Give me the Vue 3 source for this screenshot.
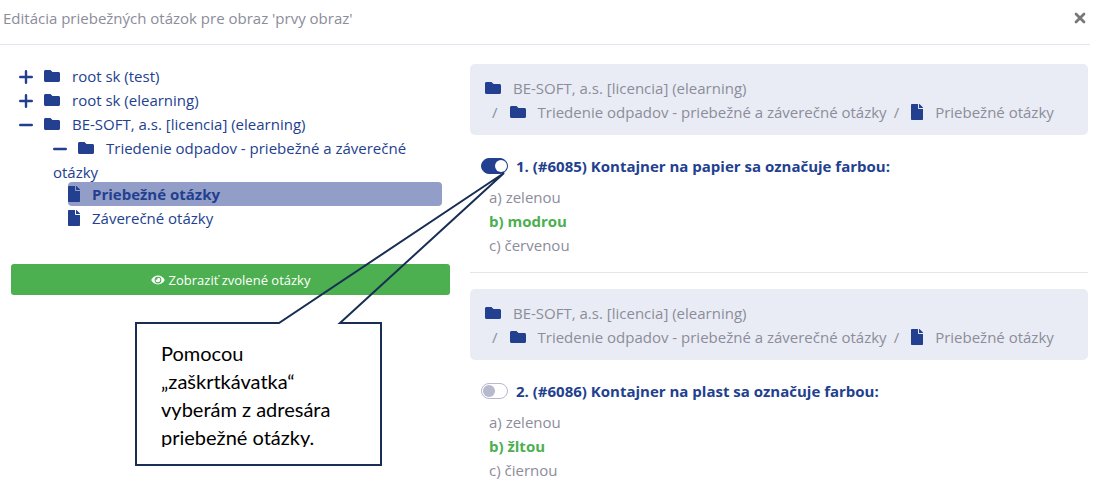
<script setup>
import { ref } from 'vue'

const paths = {
  folder: 'M464 128H272l-64-64H48C21.49 64 0 85.49 0 112v288c0 26.51 21.49 48 48 48h416c26.51 0 48-21.49 48-48V176c0-26.51-21.49-48-48-48z',
  file: 'M224 136V0H24C10.7 0 0 10.7 0 24v464c0 13.3 10.7 24 24 24h336c13.3 0 24-10.7 24-24V160H248c-13.2 0-24-10.8-24-24zm160-14.1v6.1H256V0h6.1c6.4 0 12.5 2.5 17 7l97.9 98c4.5 4.5 7 10.6 7 16.9z',
  eye: 'M572.52 241.4C518.29 135.59 410.93 64 288 64S57.68 135.64 3.48 241.41a32.35 32.35 0 0 0 0 29.19C57.71 376.41 165.07 448 288 448s230.32-71.64 284.52-177.41a32.35 32.35 0 0 0 0-29.19zM288 400a144 144 0 1 1 144-144 143.93 143.93 0 0 1-144 144zm0-240a95.31 95.31 0 0 0-25.31 3.79 47.85 47.85 0 0 1-66.9 66.9A95.78 95.78 0 1 0 288 160z'
}

const roots = ['root sk (test)', 'root sk (elearning)']

const questions = ref([
  {
    id: 'q6085',
    title: '1. (#6085) Kontajner na papier sa označuje farbou:',
    checked: true,
    answers: [
      { text: 'a) zelenou' },
      { text: 'b) modrou', correct: true },
      { text: 'c) červenou' }
    ]
  },
  {
    id: 'q6086',
    title: '2. (#6086) Kontajner na plast sa označuje farbou:',
    checked: false,
    answers: [
      { text: 'a) zelenou' },
      { text: 'b) žltou', correct: true },
      { text: 'c) čiernou' }
    ]
  }
])
</script>

<template>
  <div class="dialog">
    <header class="head">
      <h1>Editácia priebežných otázok pre obraz 'prvy obraz'</h1>
      <button class="close" type="button" aria-label="Zavrieť">
        <svg width="12" height="12" viewBox="0 0 12 12"><path d="M2 2l8 8M10 2l-8 8" stroke="currentColor" stroke-width="2.7" stroke-linecap="round" /></svg>
      </button>
    </header>

    <main class="columns">
      <section>
        <ul class="tree">
          <li v-for="name in roots" :key="name">
            <button class="toggle" type="button" aria-label="Rozbaliť">
              <svg width="14" height="14" viewBox="0 0 14 14"><path d="M1.2 7h11.6M7 1.2v11.6" stroke="currentColor" stroke-width="2.4" stroke-linecap="round" /></svg>
            </button>
            <a href="#"><svg class="folder" viewBox="0 0 512 512"><path :d="paths.folder" /></svg>{{ name }}</a>
          </li>
          <li>
            <button class="toggle" type="button" aria-label="Zbaliť">
              <svg width="14" height="14" viewBox="0 0 14 14"><path d="M1.2 7h11.6" stroke="currentColor" stroke-width="2.4" stroke-linecap="round" /></svg>
            </button>
            <a href="#"><svg class="folder" viewBox="0 0 512 512"><path :d="paths.folder" /></svg>BE-SOFT, a.s. [licencia] (elearning)</a>
            <ul class="level2">
              <li>
                <button class="toggle" type="button" aria-label="Zbaliť">
                  <svg width="14" height="14" viewBox="0 0 14 14"><path d="M1.2 7h11.6" stroke="currentColor" stroke-width="2.4" stroke-linecap="round" /></svg>
                </button>
                <a href="#"><svg class="folder" viewBox="0 0 512 512"><path :d="paths.folder" /></svg>Triedenie odpadov - priebežné a záverečné otázky</a>
                <ul class="level3">
                  <li class="selected">
                    <a href="#"><svg class="file" viewBox="0 0 384 512"><path :d="paths.file" /></svg>Priebežné otázky</a>
                  </li>
                  <li>
                    <a href="#"><svg class="file" viewBox="0 0 384 512"><path :d="paths.file" /></svg>Záverečné otázky</a>
                  </li>
                </ul>
              </li>
            </ul>
          </li>
        </ul>
        <button class="show" type="button">
          <svg width="14" height="12" viewBox="0 0 576 512"><path :d="paths.eye" /></svg>
          Zobraziť zvolené otázky
        </button>
      </section>

      <section>
        <article v-for="q in questions" :key="q.id" class="question">
          <nav class="crumbs" aria-label="Cesta">
            <div><svg class="folder" viewBox="0 0 512 512"><path :d="paths.folder" /></svg>BE-SOFT, a.s. [licencia] (elearning)</div>
            <div>
              <span class="slash">/</span><svg class="folder" viewBox="0 0 512 512"><path :d="paths.folder" /></svg>Triedenie odpadov - priebežné a záverečné otázky<span class="slash">/</span><svg class="file" viewBox="0 0 384 512"><path :d="paths.file" /></svg>Priebežné otázky
            </div>
          </nav>
          <div class="title">
            <input :id="q.id" v-model="q.checked" type="checkbox" />
            <label :for="q.id">{{ q.title }}</label>
          </div>
          <ul class="answers">
            <li v-for="a in q.answers" :key="a.text" :class="{ correct: a.correct }">{{ a.text }}</li>
          </ul>
        </article>
      </section>
    </main>

    <aside class="callout">
      <svg width="372" height="296" viewBox="0 0 372 296"><path d="M1 152H144L369 2L205 152H246V294H1Z" fill="none" stroke="#192e54" stroke-width="2" /></svg>
      <p>Pomocou<br />„zaškrtkávatka“<br />vyberám z adresára<br />priebežné otázky.</p>
    </aside>
  </div>
</template>

<style>
body {
  background: #fff;
}
</style>

<style scoped>
.dialog {
  position: relative;
  font: 15px/24px "Open Sans", "Noto Sans", sans-serif;
  color: #8c8c9b;
}
ul {
  list-style: none;
  margin: 0;
  padding: 0;
}
button {
  border: 0;
  padding: 0;
  background: none;
  font: inherit;
  color: inherit;
  cursor: pointer;
}
.head {
  display: flex;
  justify-content: space-between;
  align-items: center;
  margin-right: 5px;
  padding: 6px 4px 14px 3px;
  border-bottom: 1px solid #e4e6f0;
}
h1 {
  margin: 0;
  font: inherit;
}
.close {
  display: flex;
  color: #777;
}
.columns {
  display: grid;
  grid-template-columns: 439fr 618fr;
  gap: 20px;
  padding: 19px 7px 0 11px;
}
.tree {
  padding: 0 8px;
  color: #233f8f;
}
.tree a {
  color: inherit;
  text-decoration: none;
}
.toggle svg {
  vertical-align: -2px;
  margin-right: 8px;
}
.toggle {
  margin-right: 3px;
}
.folder,
.file {
  height: 16px;
  vertical-align: -2px;
  margin-right: 12px;
  fill: #233f8f;
}
.folder {
  width: 16px;
}
.file {
  width: 12px;
}
.level2 {
  padding-left: 34px;
}
.level3 {
  margin-top: -2px;
  padding-left: 15px;
}
.selected {
  border-radius: 4px;
  background: #929ec7;
  font-weight: 700;
}
.show {
  display: flex;
  justify-content: center;
  align-items: center;
  gap: 4px;
  width: 100%;
  height: 31px;
  margin-top: 34px;
  border-radius: 3px;
  background: #4caf50;
  color: #fff;
  font-size: 13px;
}
.show svg {
  fill: #fff;
}
.crumbs {
  padding: 12px 15px 11px;
  border-radius: 5px;
  background: #e9ecf4;
}
.slash {
  margin: 0 12px 0 7px;
}
.title {
  display: flex;
  align-items: center;
  gap: 8px;
  margin: 19px 0 7px 11px;
  color: #233f8f;
  font-weight: 700;
}
input {
  appearance: none;
  display: flex;
  align-items: center;
  box-sizing: border-box;
  width: 27px;
  height: 16px;
  margin: 0;
  padding: 0 1px;
  border: 1px solid #b7b9cc;
  border-radius: 8px;
  background: #fff;
}
input::before {
  content: "";
  width: 12px;
  height: 12px;
  border-radius: 6px;
  background: #b7b9cc;
}
input:checked {
  justify-content: flex-end;
  padding: 0;
  border-color: #233f8f;
  background: #233f8f;
}
input:checked::before {
  background: #fff;
}
.answers {
  padding-left: 19px;
}
.correct {
  color: #4caf50;
  font-weight: 700;
}
.question + .question {
  margin-top: 15px;
  padding-top: 16px;
  border-top: 1px solid #e6e6ea;
}
.callout {
  position: absolute;
  left: 135px;
  top: 171px;
  pointer-events: none;
}
.callout svg {
  display: block;
}
.callout p {
  position: absolute;
  left: 26px;
  top: 168px;
  margin: 0;
  height: 108px;
  overflow: hidden;
  white-space: nowrap;
  color: #000;
  font: 20px/28px Lato, sans-serif;
}
</style>
